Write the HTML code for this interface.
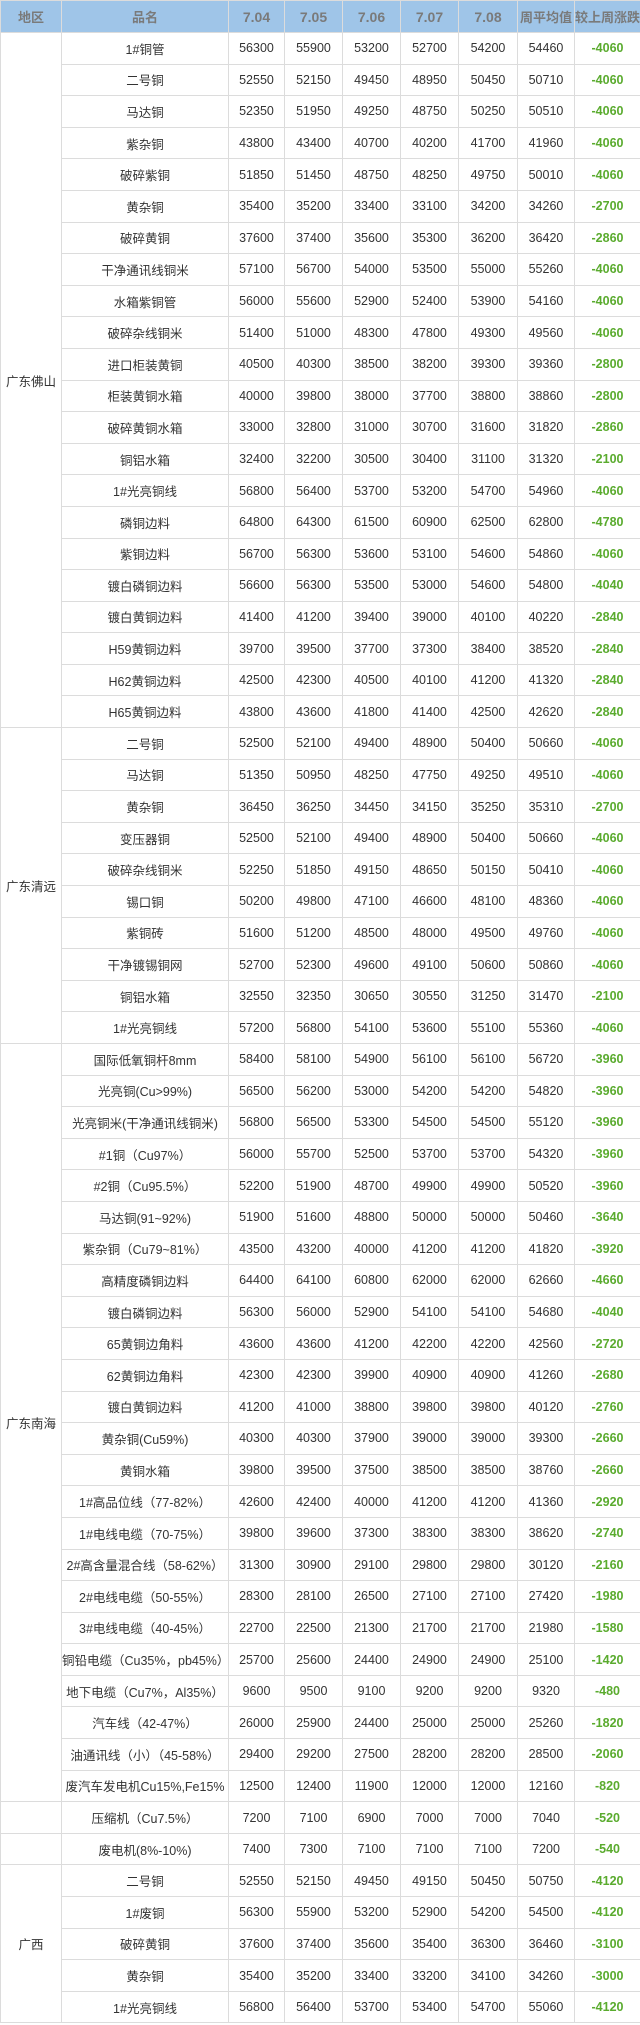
<!DOCTYPE html>
<html><head><meta charset="utf-8">
<style>
html,body{margin:0;padding:0;background:#fff;}
body{width:640px;height:2025px;overflow:hidden;}
table{border-collapse:collapse;table-layout:fixed;width:640px;font-family:"Liberation Sans","Noto Sans CJK SC",sans-serif;font-size:12.5px;color:#333;}
td,th{border:1px solid #dcdcdc;text-align:center;padding:0;height:30.6px;white-space:nowrap;overflow:hidden;}
th{background:#9fc5e8;color:#7a7a7a;font-weight:bold;height:31px;font-size:13px;}
th.d{font-size:14px;}
td.g{color:#5aab2e;font-weight:bold;}
td.r{text-align:center;}
</style></head><body>
<table>
<colgroup><col style="width:61px"><col style="width:167px"><col style="width:56px"><col style="width:58px"><col style="width:58px"><col style="width:58px"><col style="width:59px"><col style="width:57px"><col style="width:66px"></colgroup>
<tr><th>地区</th><th>品名</th><th class="d">7.04</th><th class="d">7.05</th><th class="d">7.06</th><th class="d">7.07</th><th class="d">7.08</th><th>周平均值</th><th>较上周涨跌</th></tr>
<tr><td rowspan="22" class="r">广东佛山</td><td>1#铜管</td><td>56300</td><td>55900</td><td>53200</td><td>52700</td><td>54200</td><td>54460</td><td class="g">-4060</td></tr>
<tr><td>二号铜</td><td>52550</td><td>52150</td><td>49450</td><td>48950</td><td>50450</td><td>50710</td><td class="g">-4060</td></tr>
<tr><td>马达铜</td><td>52350</td><td>51950</td><td>49250</td><td>48750</td><td>50250</td><td>50510</td><td class="g">-4060</td></tr>
<tr><td>紫杂铜</td><td>43800</td><td>43400</td><td>40700</td><td>40200</td><td>41700</td><td>41960</td><td class="g">-4060</td></tr>
<tr><td>破碎紫铜</td><td>51850</td><td>51450</td><td>48750</td><td>48250</td><td>49750</td><td>50010</td><td class="g">-4060</td></tr>
<tr><td>黄杂铜</td><td>35400</td><td>35200</td><td>33400</td><td>33100</td><td>34200</td><td>34260</td><td class="g">-2700</td></tr>
<tr><td>破碎黄铜</td><td>37600</td><td>37400</td><td>35600</td><td>35300</td><td>36200</td><td>36420</td><td class="g">-2860</td></tr>
<tr><td>干净通讯线铜米</td><td>57100</td><td>56700</td><td>54000</td><td>53500</td><td>55000</td><td>55260</td><td class="g">-4060</td></tr>
<tr><td>水箱紫铜管</td><td>56000</td><td>55600</td><td>52900</td><td>52400</td><td>53900</td><td>54160</td><td class="g">-4060</td></tr>
<tr><td>破碎杂线铜米</td><td>51400</td><td>51000</td><td>48300</td><td>47800</td><td>49300</td><td>49560</td><td class="g">-4060</td></tr>
<tr><td>进口柜装黄铜</td><td>40500</td><td>40300</td><td>38500</td><td>38200</td><td>39300</td><td>39360</td><td class="g">-2800</td></tr>
<tr><td>柜装黄铜水箱</td><td>40000</td><td>39800</td><td>38000</td><td>37700</td><td>38800</td><td>38860</td><td class="g">-2800</td></tr>
<tr><td>破碎黄铜水箱</td><td>33000</td><td>32800</td><td>31000</td><td>30700</td><td>31600</td><td>31820</td><td class="g">-2860</td></tr>
<tr><td>铜铝水箱</td><td>32400</td><td>32200</td><td>30500</td><td>30400</td><td>31100</td><td>31320</td><td class="g">-2100</td></tr>
<tr><td>1#光亮铜线</td><td>56800</td><td>56400</td><td>53700</td><td>53200</td><td>54700</td><td>54960</td><td class="g">-4060</td></tr>
<tr><td>磷铜边料</td><td>64800</td><td>64300</td><td>61500</td><td>60900</td><td>62500</td><td>62800</td><td class="g">-4780</td></tr>
<tr><td>紫铜边料</td><td>56700</td><td>56300</td><td>53600</td><td>53100</td><td>54600</td><td>54860</td><td class="g">-4060</td></tr>
<tr><td>镀白磷铜边料</td><td>56600</td><td>56300</td><td>53500</td><td>53000</td><td>54600</td><td>54800</td><td class="g">-4040</td></tr>
<tr><td>镀白黄铜边料</td><td>41400</td><td>41200</td><td>39400</td><td>39000</td><td>40100</td><td>40220</td><td class="g">-2840</td></tr>
<tr><td>H59黄铜边料</td><td>39700</td><td>39500</td><td>37700</td><td>37300</td><td>38400</td><td>38520</td><td class="g">-2840</td></tr>
<tr><td>H62黄铜边料</td><td>42500</td><td>42300</td><td>40500</td><td>40100</td><td>41200</td><td>41320</td><td class="g">-2840</td></tr>
<tr><td>H65黄铜边料</td><td>43800</td><td>43600</td><td>41800</td><td>41400</td><td>42500</td><td>42620</td><td class="g">-2840</td></tr>
<tr><td rowspan="10">广东清远</td><td>二号铜</td><td>52500</td><td>52100</td><td>49400</td><td>48900</td><td>50400</td><td>50660</td><td class="g">-4060</td></tr>
<tr><td>马达铜</td><td>51350</td><td>50950</td><td>48250</td><td>47750</td><td>49250</td><td>49510</td><td class="g">-4060</td></tr>
<tr><td>黄杂铜</td><td>36450</td><td>36250</td><td>34450</td><td>34150</td><td>35250</td><td>35310</td><td class="g">-2700</td></tr>
<tr><td>变压器铜</td><td>52500</td><td>52100</td><td>49400</td><td>48900</td><td>50400</td><td>50660</td><td class="g">-4060</td></tr>
<tr><td>破碎杂线铜米</td><td>52250</td><td>51850</td><td>49150</td><td>48650</td><td>50150</td><td>50410</td><td class="g">-4060</td></tr>
<tr><td>锡口铜</td><td>50200</td><td>49800</td><td>47100</td><td>46600</td><td>48100</td><td>48360</td><td class="g">-4060</td></tr>
<tr><td>紫铜砖</td><td>51600</td><td>51200</td><td>48500</td><td>48000</td><td>49500</td><td>49760</td><td class="g">-4060</td></tr>
<tr><td>干净镀锡铜网</td><td>52700</td><td>52300</td><td>49600</td><td>49100</td><td>50600</td><td>50860</td><td class="g">-4060</td></tr>
<tr><td>铜铝水箱</td><td>32550</td><td>32350</td><td>30650</td><td>30550</td><td>31250</td><td>31470</td><td class="g">-2100</td></tr>
<tr><td>1#光亮铜线</td><td>57200</td><td>56800</td><td>54100</td><td>53600</td><td>55100</td><td>55360</td><td class="g">-4060</td></tr>
<tr><td rowspan="24">广东南海</td><td>国际低氧铜杆8mm</td><td>58400</td><td>58100</td><td>54900</td><td>56100</td><td>56100</td><td>56720</td><td class="g">-3960</td></tr>
<tr><td>光亮铜(Cu&gt;99%)</td><td>56500</td><td>56200</td><td>53000</td><td>54200</td><td>54200</td><td>54820</td><td class="g">-3960</td></tr>
<tr><td>光亮铜米(干净通讯线铜米)</td><td>56800</td><td>56500</td><td>53300</td><td>54500</td><td>54500</td><td>55120</td><td class="g">-3960</td></tr>
<tr><td>#1铜（Cu97%）</td><td>56000</td><td>55700</td><td>52500</td><td>53700</td><td>53700</td><td>54320</td><td class="g">-3960</td></tr>
<tr><td>#2铜（Cu95.5%）</td><td>52200</td><td>51900</td><td>48700</td><td>49900</td><td>49900</td><td>50520</td><td class="g">-3960</td></tr>
<tr><td>马达铜(91~92%)</td><td>51900</td><td>51600</td><td>48800</td><td>50000</td><td>50000</td><td>50460</td><td class="g">-3640</td></tr>
<tr><td>紫杂铜（Cu79~81%）</td><td>43500</td><td>43200</td><td>40000</td><td>41200</td><td>41200</td><td>41820</td><td class="g">-3920</td></tr>
<tr><td>高精度磷铜边料</td><td>64400</td><td>64100</td><td>60800</td><td>62000</td><td>62000</td><td>62660</td><td class="g">-4660</td></tr>
<tr><td>镀白磷铜边料</td><td>56300</td><td>56000</td><td>52900</td><td>54100</td><td>54100</td><td>54680</td><td class="g">-4040</td></tr>
<tr><td>65黄铜边角料</td><td>43600</td><td>43600</td><td>41200</td><td>42200</td><td>42200</td><td>42560</td><td class="g">-2720</td></tr>
<tr><td>62黄铜边角料</td><td>42300</td><td>42300</td><td>39900</td><td>40900</td><td>40900</td><td>41260</td><td class="g">-2680</td></tr>
<tr><td>镀白黄铜边料</td><td>41200</td><td>41000</td><td>38800</td><td>39800</td><td>39800</td><td>40120</td><td class="g">-2760</td></tr>
<tr><td>黄杂铜(Cu59%)</td><td>40300</td><td>40300</td><td>37900</td><td>39000</td><td>39000</td><td>39300</td><td class="g">-2660</td></tr>
<tr><td>黄铜水箱</td><td>39800</td><td>39500</td><td>37500</td><td>38500</td><td>38500</td><td>38760</td><td class="g">-2660</td></tr>
<tr><td>1#高品位线（77-82%）</td><td>42600</td><td>42400</td><td>40000</td><td>41200</td><td>41200</td><td>41360</td><td class="g">-2920</td></tr>
<tr><td>1#电线电缆（70-75%）</td><td>39800</td><td>39600</td><td>37300</td><td>38300</td><td>38300</td><td>38620</td><td class="g">-2740</td></tr>
<tr><td>2#高含量混合线（58-62%）</td><td>31300</td><td>30900</td><td>29100</td><td>29800</td><td>29800</td><td>30120</td><td class="g">-2160</td></tr>
<tr><td>2#电线电缆（50-55%）</td><td>28300</td><td>28100</td><td>26500</td><td>27100</td><td>27100</td><td>27420</td><td class="g">-1980</td></tr>
<tr><td>3#电线电缆（40-45%）</td><td>22700</td><td>22500</td><td>21300</td><td>21700</td><td>21700</td><td>21980</td><td class="g">-1580</td></tr>
<tr><td>铜铅电缆（Cu35%，pb45%）</td><td>25700</td><td>25600</td><td>24400</td><td>24900</td><td>24900</td><td>25100</td><td class="g">-1420</td></tr>
<tr><td>地下电缆（Cu7%，Al35%）</td><td>9600</td><td>9500</td><td>9100</td><td>9200</td><td>9200</td><td>9320</td><td class="g">-480</td></tr>
<tr><td>汽车线（42-47%）</td><td>26000</td><td>25900</td><td>24400</td><td>25000</td><td>25000</td><td>25260</td><td class="g">-1820</td></tr>
<tr><td>油通讯线（小）（45-58%）</td><td>29400</td><td>29200</td><td>27500</td><td>28200</td><td>28200</td><td>28500</td><td class="g">-2060</td></tr>
<tr><td>废汽车发电机Cu15%,Fe15%</td><td>12500</td><td>12400</td><td>11900</td><td>12000</td><td>12000</td><td>12160</td><td class="g">-820</td></tr>
<tr><td></td><td>压缩机（Cu7.5%）</td><td>7200</td><td>7100</td><td>6900</td><td>7000</td><td>7000</td><td>7040</td><td class="g">-520</td></tr>
<tr><td></td><td>废电机(8%-10%)</td><td>7400</td><td>7300</td><td>7100</td><td>7100</td><td>7100</td><td>7200</td><td class="g">-540</td></tr>
<tr><td rowspan="5">广西</td><td>二号铜</td><td>52550</td><td>52150</td><td>49450</td><td>49150</td><td>50450</td><td>50750</td><td class="g">-4120</td></tr>
<tr><td>1#废铜</td><td>56300</td><td>55900</td><td>53200</td><td>52900</td><td>54200</td><td>54500</td><td class="g">-4120</td></tr>
<tr><td>破碎黄铜</td><td>37600</td><td>37400</td><td>35600</td><td>35400</td><td>36300</td><td>36460</td><td class="g">-3100</td></tr>
<tr><td>黄杂铜</td><td>35400</td><td>35200</td><td>33400</td><td>33200</td><td>34100</td><td>34260</td><td class="g">-3000</td></tr>
<tr><td>1#光亮铜线</td><td>56800</td><td>56400</td><td>53700</td><td>53400</td><td>54700</td><td>55060</td><td class="g">-4120</td></tr>
</table>
</body></html>
